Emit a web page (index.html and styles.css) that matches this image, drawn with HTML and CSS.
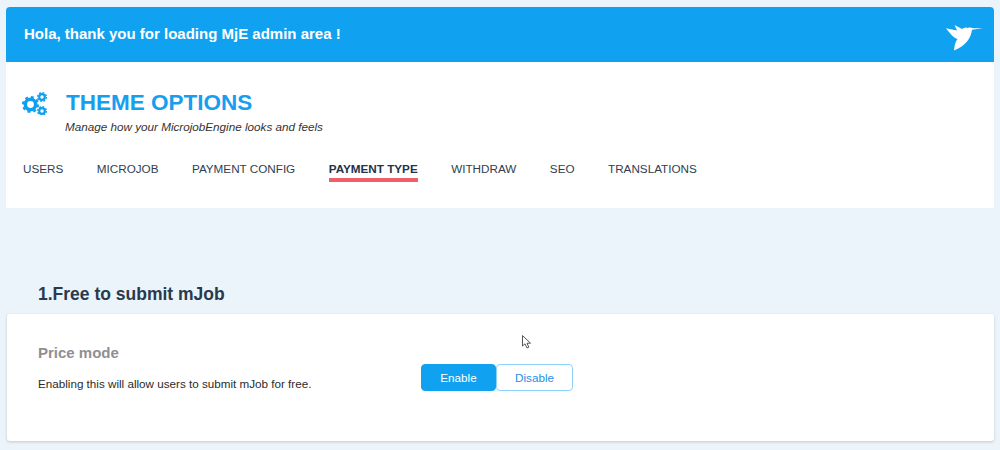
FILE: index.html
```html
<!DOCTYPE html>
<html lang="en">
<head>
<meta charset="utf-8">
<title>Theme Options</title>
<link rel="stylesheet" href="styles.css">
</head>
<body>
<div class="page">
  <header class="banner">
    <span class="banner-text">Hola, thank you for loading MjE admin area !</span>
    <svg class="bird" viewBox="0 0 45 32" aria-hidden="true">
      <path d="M0 8.3 L11 10.5 L8.5 5 L16 9 C18 7.5 20 7 22 8 C23.5 7.2 25 7.5 27 8.2 L37 8.3 L26 9.8 C25.5 14 24 18 21 21.5 C18 25 14 28 8 30.5 C8.5 26 9 22 11.5 19 C8 18.5 3.5 13 0 8.3 Z"/>
    </svg>
  </header>
  <section class="options">
    <div class="title-row">
      <svg class="gears" viewBox="0 0 26 24" aria-hidden="true">
        <g fill="none" stroke="#0f9fef">
          <circle cx="9.5" cy="13.5" r="5.2" stroke-width="3.6"/>
          <circle cx="9.5" cy="13.5" r="7.6" stroke-width="2" stroke-dasharray="3 3"/>
          <circle cx="21" cy="6" r="2.8" stroke-width="2.2"/>
          <circle cx="21" cy="6" r="4.4" stroke-width="1.4" stroke-dasharray="1.8 1.65"/>
          <circle cx="21" cy="20" r="2.8" stroke-width="2.2"/>
          <circle cx="21" cy="20" r="4.4" stroke-width="1.4" stroke-dasharray="1.8 1.65"/>
        </g>
      </svg>
      <div class="title-text">
        <h1 class="title">THEME OPTIONS</h1>
        <p class="subtitle">Manage how your MicrojobEngine looks and feels</p>
      </div>
    </div>
    <nav class="tabs">
      <a class="tab">USERS</a>
      <a class="tab">MICROJOB</a>
      <a class="tab">PAYMENT CONFIG</a>
      <a class="tab tab-active">PAYMENT TYPE</a>
      <a class="tab">WITHDRAW</a>
      <a class="tab">SEO</a>
      <a class="tab">TRANSLATIONS</a>
    </nav>
  </section>
  <h2 class="section-title">1.Free to submit mJob</h2>
  <section class="card">
    <div class="card-info">
      <h3 class="card-title">Price mode</h3>
      <p class="card-desc">Enabling this will allow users to submit mJob for free.</p>
    </div>
    <div class="toggle">
      <button class="btn btn-on">Enable</button>
      <button class="btn btn-off">Disable</button>
    </div>
  </section>
</div>
<svg class="cursor" viewBox="0 0 10 14" aria-hidden="true">
  <path d="M0.5 0.5 V11 L3 8.8 L5 13 L6.8 12.2 L5 8.2 H8.5 Z" fill="#fff" stroke="#555" stroke-width="1"/>
</svg>
</body>
</html>
```
FILE: styles.css
```css
* { box-sizing: border-box; }
html, body { margin: 0; padding: 0; }
body {
  height: 450px;
  overflow: hidden;
  background: #ebf4fa;
  font-family: "Liberation Sans", Arial, sans-serif;
  color: #2a3a4d;
}
.page { padding: 7px 6px 0; }
.banner {
  height: 55px;
  background: #10a2f0;
  border-radius: 4px 4px 0 0;
  display: flex;
  align-items: center;
  justify-content: space-between;
  padding: 0 9px 2px 18px;
}
.banner-text { color: #fff; font-size: 15px; font-weight: 700; }
.bird { width: 45px; height: 32px; fill: #fff; margin-top: 5px; margin-right: -6px; }
.options {
  height: 146px;
  background: #fff;
  padding: 27px 0 0 16px;
}
.title-row { display: flex; align-items: flex-start; }
.gears { width: 26px; height: 24px; margin-top: 2px; flex: none; margin-left: -1px; }
.title-text { margin-left: 18px; }
.title {
  margin: 0;
  font-size: 22.5px;
  line-height: 28px;
  font-weight: 700;
  color: #189eee;
  padding-left: 1px;
}
.subtitle {
  margin: 3px 0 0;
  font-size: 11.7px;
  line-height: 14px;
  font-style: italic;
  color: #333;
}
.tabs { display: flex; gap: 33.5px; margin-top: 28px; padding-left: 1px; }
.tab { font-size: 11.7px; line-height: 14px; padding-bottom: 2px; color: #2f3e50; }
.tab-active {
  font-weight: 700;
  color: #22324a;
  border-bottom: 4px solid #ee5f6a;
}
.section-title {
  margin: 76px 0 0 32px;
  font-size: 17.5px;
  line-height: 20px;
  font-weight: 700;
  color: #2a3a4d;
}
.card {
  margin: 10px 0 0 1px;
  height: 127px;
  background: #fff;
  border-radius: 3px;
  box-shadow: 0 1px 3px rgba(0, 0, 0, 0.18);
  display: flex;
  padding: 30px 0 0 31px;
}
.card-info { width: 383px; }
.card-title {
  margin: 0;
  font-size: 15px;
  line-height: 18px;
  font-weight: 700;
  color: #8f8f94;
}
.card-desc {
  margin: 15px 0 0;
  font-size: 11.66px;
  line-height: 14px;
  color: #2b2b2b;
}
.toggle { display: flex; margin-top: 20px; height: 27px; }
.btn {
  font-family: inherit;
  font-size: 11.7px;
  height: 27px;
  border-radius: 4px;
  padding: 0;
}
.btn-on { width: 75px; background: #10a2f0; border: 1px solid #10a2f0; color: #fff; }
.btn-off { width: 77px; background: #fff; border: 1px solid #8ed3fb; color: #1e90e8; }
.cursor { position: absolute; left: 522px; top: 335px; width: 10px; height: 14px; }
```
